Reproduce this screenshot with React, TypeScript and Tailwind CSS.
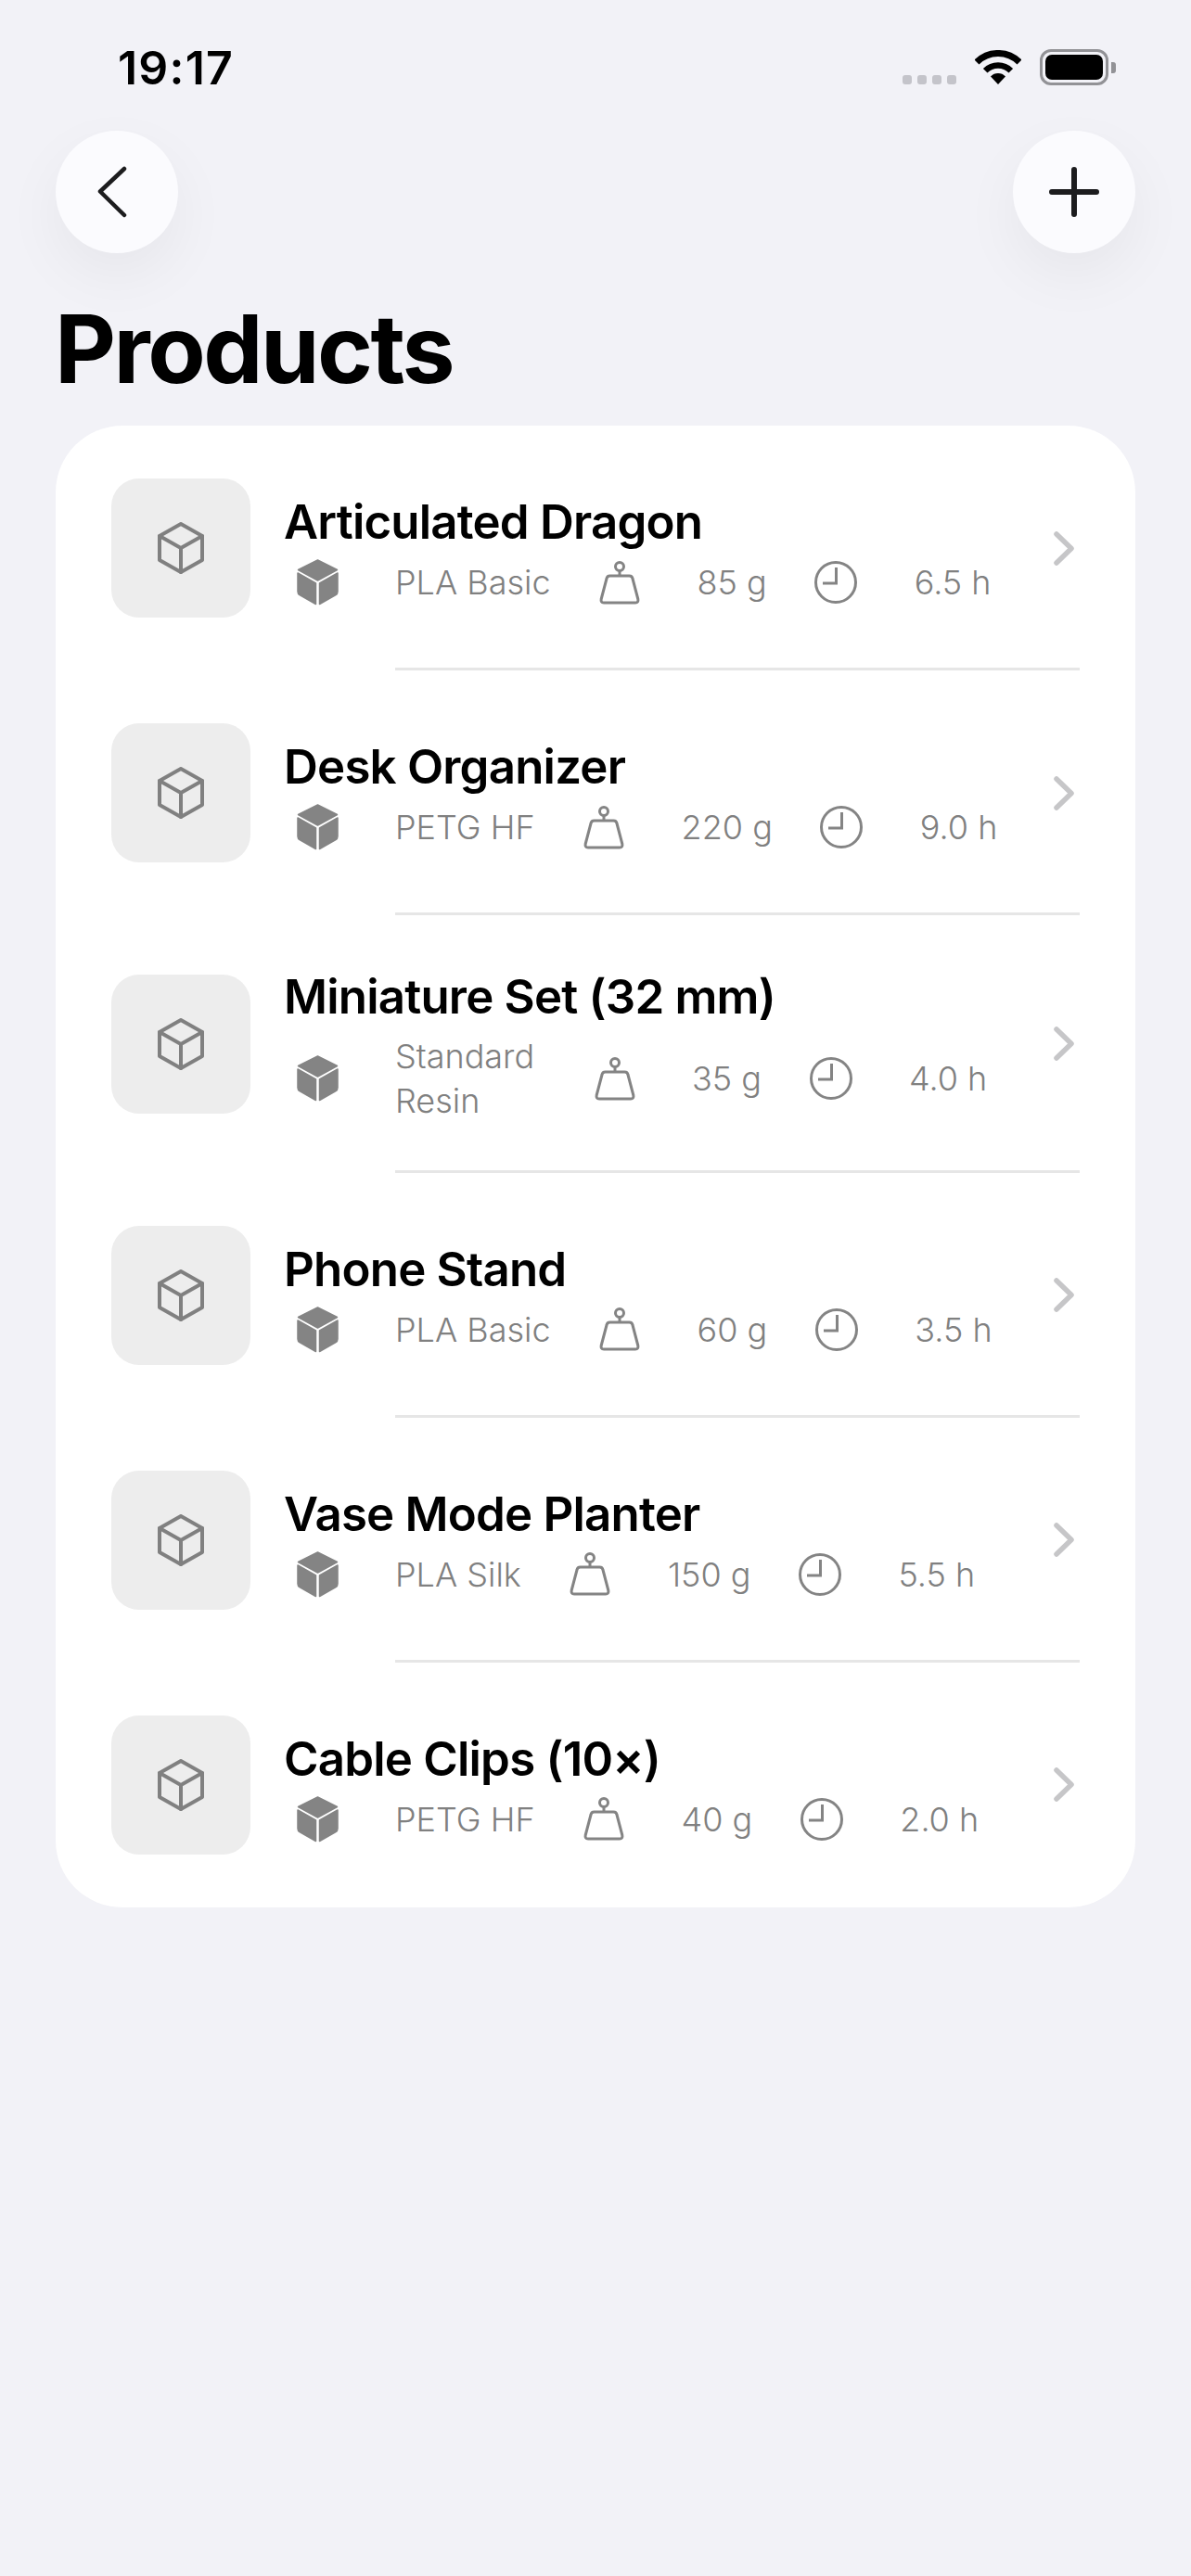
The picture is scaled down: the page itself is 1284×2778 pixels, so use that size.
import React from "react";

type Product = { name: string; material: string[]; weight: string; time: string };

const products: Product[] = [
  { name: "Articulated Dragon", material: ["PLA Basic"], weight: "85 g", time: "6.5 h" },
  { name: "Desk Organizer", material: ["PETG HF"], weight: "220 g", time: "9.0 h" },
  { name: "Miniature Set (32 mm)", material: ["Standard", "Resin"], weight: "35 g", time: "4.0 h" },
  { name: "Phone Stand", material: ["PLA Basic"], weight: "60 g", time: "3.5 h" },
  { name: "Vase Mode Planter", material: ["PLA Silk"], weight: "150 g", time: "5.5 h" },
  { name: "Cable Clips (10×)", material: ["PETG HF"], weight: "40 g", time: "2.0 h" },
];

function OutlineCube() {
  return (
    <svg width="50" height="56" viewBox="0 0 50 56" fill="none" stroke="#808080" strokeWidth="4" strokeLinejoin="round" strokeLinecap="round">
      <path d="M25 2 L48 15 V41 L25 54 L2 41 V15 Z" />
      <path d="M2 15 L25 28 L48 15 M25 28 V54" />
    </svg>
  );
}

function SolidCube() {
  return (
    <svg width="45" height="50" viewBox="0 0 45 50" fill="#848484" stroke="#848484" strokeWidth="1.5" strokeLinejoin="round">
      <path d="M22.5 1 L43.5 11.5 L22.5 23 L1.5 11.5 Z" />
      <path d="M1 15 L20.5 26 V48.5 L3 38.5 Q1 37.5 1 35 Z" />
      <path d="M44 15 L24.5 26 V48.5 L42 38.5 Q44 37.5 44 35 Z" />
    </svg>
  );
}

function WeightIcon() {
  return (
    <svg width="44" height="47" viewBox="0 0 44 47" fill="none" stroke="#848484" strokeWidth="3" strokeLinejoin="round">
      <circle cx="22" cy="6" r="4.5" />
      <path d="M22 10.5 V16" />
      <path d="M11.5 16 H32.5 Q35.5 16 36 19 L41.8 41 Q42.6 45 39 45 H5 Q1.4 45 2.2 41 L8 19 Q8.5 16 11.5 16 Z" />
    </svg>
  );
}

function ClockIcon() {
  return (
    <svg width="46" height="46" viewBox="0 0 46 46" fill="none" stroke="#848484" strokeWidth="3">
      <circle cx="23" cy="23" r="21.5" />
      <path d="M23.5 7 V24 H9" />
    </svg>
  );
}

function Row({ p }: { p: Product }) {
  return (
    <div className="flex items-center pl-[60px] pr-[60px] pt-[57px] pb-[54px] last:pb-[57px]">
      <div className="flex h-[150px] w-[150px] shrink-0 items-center justify-center rounded-[30px] bg-[#ededed]">
        <OutlineCube />
      </div>
      <div className="-mb-[3.5px] ml-[36px] flex min-w-0 flex-1 flex-col pt-[6px]">
        <div className="text-[51px] font-semibold leading-[50px] tracking-[-0.8px] text-black">{p.name}</div>
        <div className="mt-[15px] flex items-center text-[36px] font-light leading-[48px] text-[#808080]">
          <div className="flex w-[73px] justify-center"><SolidCube /></div>
          <div className={p.material.length > 1 ? "ml-[47px] w-[162px]" : "ml-[47px]"}>
            {p.material.map((m) => (
              <div key={m}>{m}</div>
            ))}
          </div>
          <div className="ml-[38px] flex w-[73px] justify-center"><WeightIcon /></div>
          <div className="ml-[47px]">{p.weight}</div>
          <div className="ml-[38px] flex w-[73px] justify-center"><ClockIcon /></div>
          <div className="ml-[48px]">{p.time}</div>
        </div>
      </div>
      <svg className="mr-[6px] shrink-0" width="22" height="37" viewBox="0 0 22 37" fill="none" stroke="#c6c6c8" strokeWidth="5.5" strokeLinecap="round" strokeLinejoin="round">
        <path d="M3 3 L19 18.5 L3 34" />
      </svg>
    </div>
  );
}

export default function App() {
  return (
    <div className="min-h-[2778px] bg-[#f2f2f7] font-[Inter]">
      <div className="flex h-[141px] items-start pl-[127px] pr-[81px] pt-[43px]">
        <div className="text-[50px] font-semibold leading-[60px] tracking-[1.2px] text-black">19:17</div>
        <div className="ml-auto flex items-start">
          <div className="mt-[38px] flex gap-[6px]">
            <div className="h-[10px] w-[10px] rounded-[3px] bg-[#c4c4ca]" />
            <div className="h-[10px] w-[10px] rounded-[3px] bg-[#c4c4ca]" />
            <div className="h-[10px] w-[10px] rounded-[3px] bg-[#c4c4ca]" />
            <div className="h-[10px] w-[10px] rounded-[3px] bg-[#c4c4ca]" />
          </div>
          <svg className="ml-[20px] mt-[11px]" width="50" height="37" viewBox="0 0 50 37" fill="none" stroke="#000">
            <path d="M2 13 A32.5 32.5 0 0 1 48 13" strokeWidth="7" />
            <path d="M11.2 22.2 A19.5 19.5 0 0 1 38.8 22.2" strokeWidth="6.5" />
            <path d="M25 37 L17 28.5 A11 11 0 0 1 33 28.5 Z" fill="#000" stroke="none" />
          </svg>
          <div className="ml-[20px] mt-[10px] flex items-center">
            <div className="flex h-[39px] w-[74px] rounded-[12px] border-[3px] border-[#929296] p-[3px]">
              <div className="flex-1 rounded-[7px] bg-black" />
            </div>
            <div className="ml-[3px] h-[12px] w-[5px] rounded-r-[3px] bg-[#929296]" />
          </div>
        </div>
      </div>

      <div className="flex justify-between px-[60px]">
        <button className="flex h-[132px] w-[132px] items-center justify-center rounded-full bg-[#fbfbfe] shadow-[0_24px_64px_rgba(0,0,0,0.05)]">
          <svg width="34" height="56" viewBox="0 0 34 56" fill="none" stroke="#1c1c1e" strokeWidth="4.5" strokeLinecap="round" strokeLinejoin="round" className="mr-[10px]">
            <path d="M30 3 L4 27.5 L30 53" />
          </svg>
        </button>
        <button className="flex h-[132px] w-[132px] items-center justify-center rounded-full bg-[#fbfbfe] shadow-[0_24px_64px_rgba(0,0,0,0.05)]">
          <svg width="54" height="54" viewBox="0 0 54 54" fill="none" stroke="#1c1c1e" strokeWidth="6" strokeLinecap="round">
            <path d="M27 3 V51 M3 27 H51" />
          </svg>
        </button>
      </div>

      <h1 className="ml-[59px] mt-[42px] text-[102px] font-bold leading-[122px] tracking-[-2.5px] text-black">Products</h1>

      <div className="mx-[60px] mt-[22px] flex flex-col rounded-[72px] bg-white">
        {products.map((p, i) => (
          <React.Fragment key={p.name}>
            <Row p={p} />
            {i < products.length - 1 && <div className="ml-[366px] mr-[60px] h-[3px] shrink-0 bg-[#e6e6e6]" />}
          </React.Fragment>
        ))}
      </div>
    </div>
  );
}
